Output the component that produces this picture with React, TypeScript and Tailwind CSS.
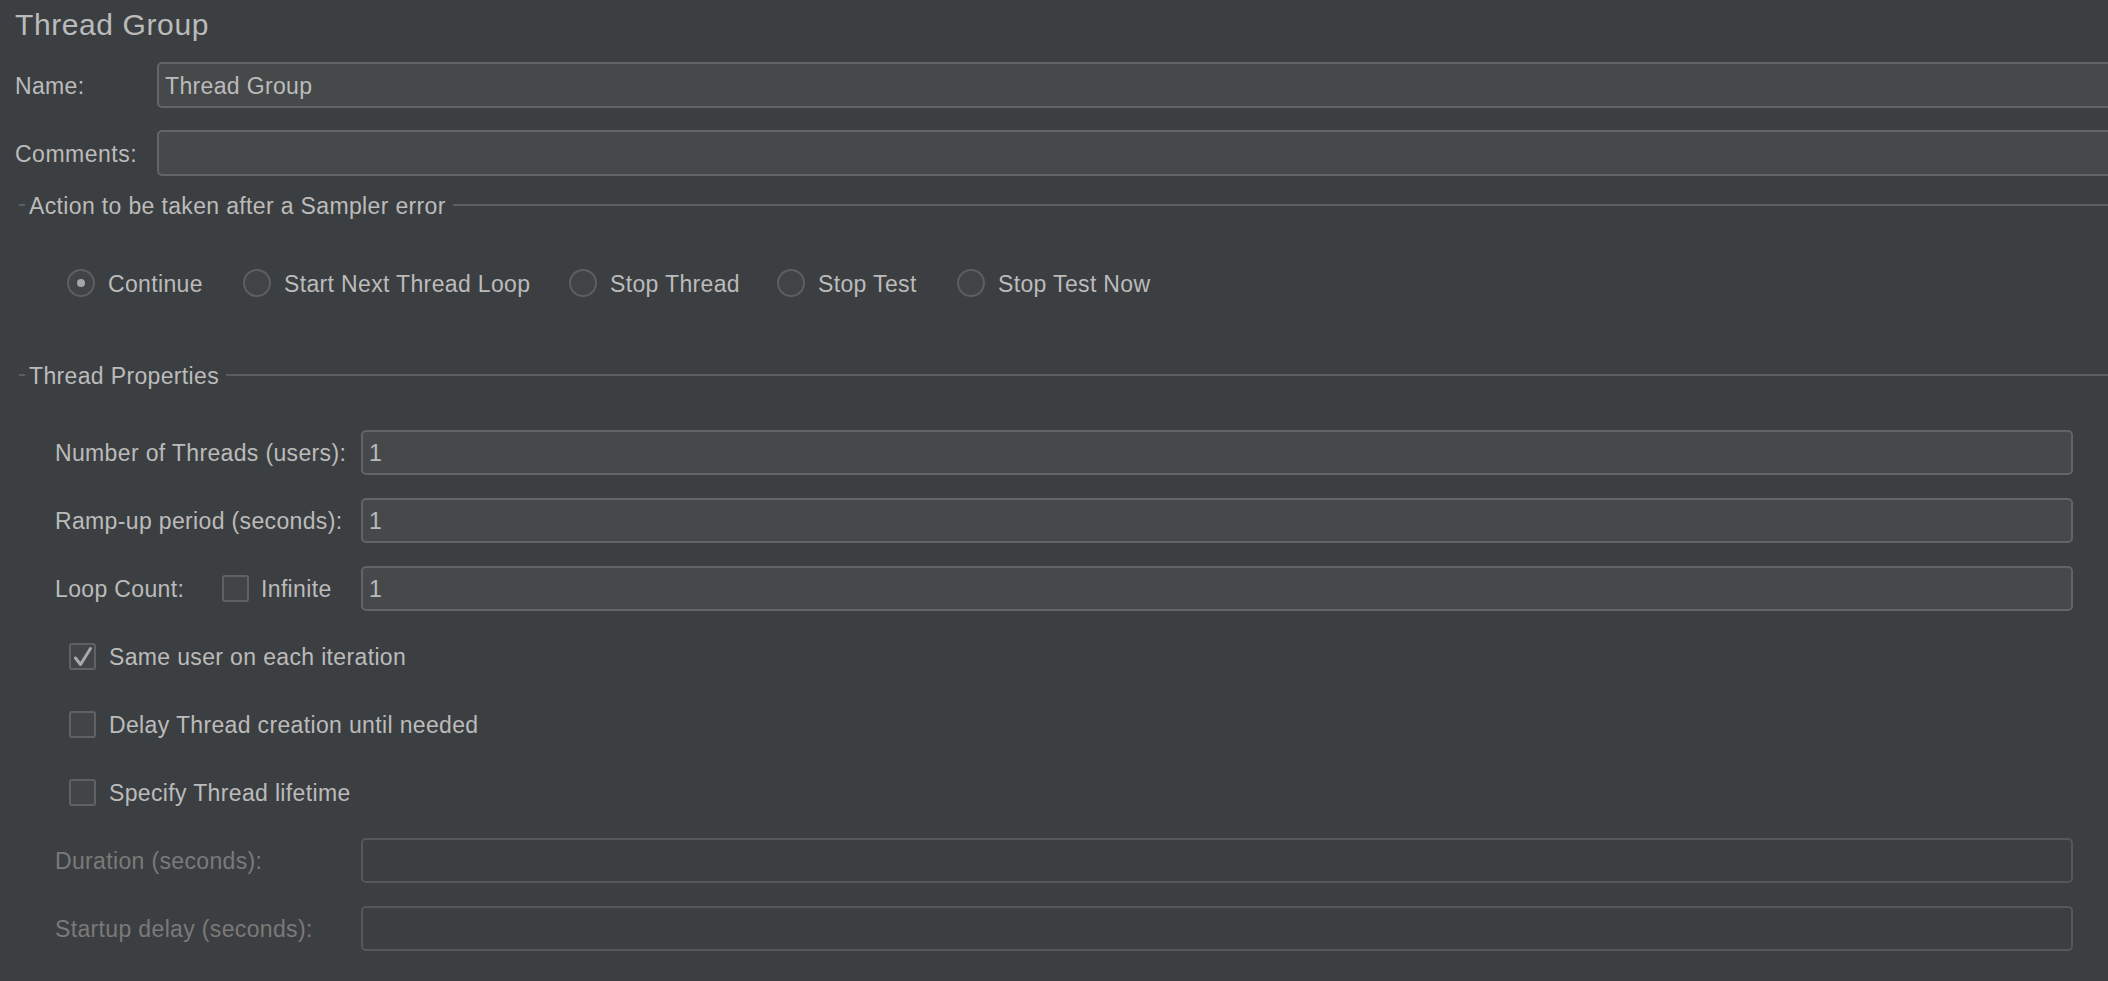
import React from "react";

function Radio({ label, selected, w }: { label: string; selected?: boolean; w: string }) {
  return (
    <div className={"flex items-center gap-[13px] shrink-0 " + w}>
      <div className="w-[28px] h-[28px] shrink-0 rounded-full border-2 border-[#5c5f60] bg-[#404446] flex items-center justify-center">
        {selected && <div className="w-[8px] h-[8px] rounded-full bg-[#a6a6a6]" />}
      </div>
      <span className="leading-none pt-[2px] whitespace-nowrap">{label}</span>
    </div>
  );
}

function Checkbox({ checked }: { checked?: boolean }) {
  return (
    <div className="w-[27px] h-[27px] shrink-0 rounded-[3px] border-2 border-[#5f6263] bg-[#414547]">
      {checked && (
        <svg width="23" height="23" viewBox="0 0 23 23">
          <polyline
            points="4.5,13 9.5,19.5 19.5,3.5"
            fill="none"
            stroke="#a9a9a9"
            strokeWidth="3"
            strokeLinecap="round"
            strokeLinejoin="round"
          />
        </svg>
      )}
    </div>
  );
}

function Field({ value, disabled }: { value?: string; disabled?: boolean }) {
  return (
    <div
      className={
        disabled
          ? "flex-1 h-full rounded-[5px] border-2 border-[#555759] bg-[#3c3f41] flex items-center pl-[6px]"
          : "flex-1 h-full rounded-[5px] border-2 border-[#646464] bg-[#45494a] flex items-center pl-[6px]"
      }
    >
      <span className="leading-none pt-[2px]">{value}</span>
    </div>
  );
}

function Header({ title }: { title: string }) {
  return (
    <div className="h-[24px] flex items-center pl-[19px]">
      <div className="w-[6px] h-[2px] bg-[#5b5e5f]" />
      <span className="ml-[4px] leading-[24px] relative top-[1px]">{title}</span>
      <div className="ml-[7px] flex-1 h-[2px] bg-[#5b5e5f]" />
    </div>
  );
}

export default function App() {
  return (
    <div className="w-[2108px] h-[981px] overflow-hidden bg-[#3c3f41] text-[#bbbbbb] text-[23px] tracking-[0.35px] font-['Liberation_Sans',Arial,sans-serif]">
      <div className="pt-[7px] pl-[15px]">
        <div className="h-[36px] text-[30px] leading-[36px] tracking-[0.6px]">Thread Group</div>
      </div>

      <div className="mt-[19px] h-[46px] flex items-center pl-[15px]">
        <span className="w-[142px] shrink-0 leading-none pt-[2px]">Name:</span>
        <div className="flex-1 h-full -mr-[12px] flex">
          <Field value="Thread Group" />
        </div>
      </div>

      <div className="mt-[22px] h-[46px] flex items-center pl-[15px]">
        <span className="w-[142px] shrink-0 leading-none pt-[2px] tracking-[0.5px]">Comments:</span>
        <div className="flex-1 h-full -mr-[12px] flex">
          <Field value="" />
        </div>
      </div>

      <div className="mt-[17px]">
        <Header title="Action to be taken after a Sampler error" />
      </div>

      <div className="mt-[52px] h-[28px] flex items-center pl-[67px]">
        <Radio label="Continue" selected w="w-[176px]" />
        <Radio label="Start Next Thread Loop" w="w-[326px]" />
        <Radio label="Stop Thread" w="w-[208px]" />
        <Radio label="Stop Test" w="w-[180px]" />
        <Radio label="Stop Test Now" w="w-[220px]" />
      </div>

      <div className="mt-[66px]">
        <Header title="Thread Properties" />
      </div>

      <div className="mt-[43px] flex flex-col gap-[23px] pl-[55px] pr-[35px]">
        <div className="h-[45px] flex items-center">
          <span className="w-[306px] shrink-0 leading-none pt-[2px]">Number of Threads (users):</span>
          <Field value="1" />
        </div>
        <div className="h-[45px] flex items-center">
          <span className="w-[306px] shrink-0 leading-none pt-[2px]">Ramp-up period (seconds):</span>
          <Field value="1" />
        </div>
        <div className="h-[45px] flex items-center">
          <div className="w-[306px] shrink-0 flex items-center">
            <span className="w-[167px] shrink-0 leading-none pt-[2px]">Loop Count:</span>
            <Checkbox />
            <span className="ml-[12px] leading-none pt-[2px]">Infinite</span>
          </div>
          <Field value="1" />
        </div>
        <div className="h-[45px] flex items-center pl-[14px] gap-[13px]">
          <Checkbox checked />
          <span className="leading-none pt-[2px]">Same user on each iteration</span>
        </div>
        <div className="h-[45px] flex items-center pl-[14px] gap-[13px]">
          <Checkbox />
          <span className="leading-none pt-[2px]">Delay Thread creation until needed</span>
        </div>
        <div className="h-[45px] flex items-center pl-[14px] gap-[13px]">
          <Checkbox />
          <span className="leading-none pt-[2px]">Specify Thread lifetime</span>
        </div>
        <div className="h-[45px] flex items-center text-[#7a7a7a]">
          <span className="w-[306px] shrink-0 leading-none pt-[2px]">Duration (seconds):</span>
          <Field disabled />
        </div>
        <div className="h-[45px] flex items-center text-[#7a7a7a]">
          <span className="w-[306px] shrink-0 leading-none pt-[2px]">Startup delay (seconds):</span>
          <Field disabled />
        </div>
      </div>
    </div>
  );
}
